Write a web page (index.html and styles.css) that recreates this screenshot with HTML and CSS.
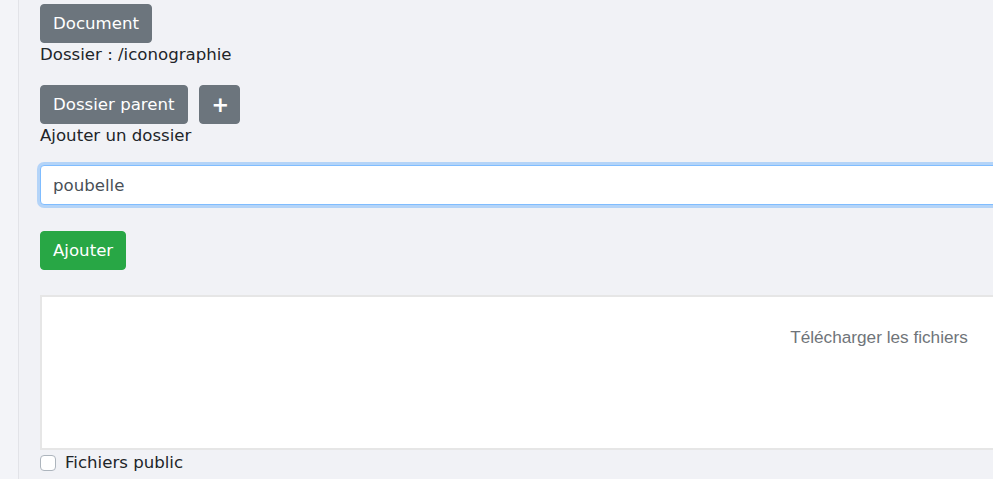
FILE: index.html
```html
<!DOCTYPE html>
<html lang="fr">
<head>
    <meta charset="UTF-8">
    <meta name="viewport" content="width=device-width, initial-scale=1.0">
    <title>Documents</title>
    <link rel="stylesheet" href="styles.css">
</head>
<body>
    <div class="side"></div>

    <div class="content">
        <button class="btn btn-grey">Document</button>
        <div class="path">Dossier : /iconographie</div>

        <div class="btn-row">
            <button class="btn btn-grey">Dossier parent</button>
            <button class="btn btn-grey btn-plus">+</button>
        </div>
        <label class="field-label" for="folder">Ajouter un dossier</label>

        <input class="field" id="folder" type="text" value="poubelle">

        <button class="btn btn-green">Ajouter</button>

        <div class="dropzone">
            <div class="dz-message">Télécharger les fichiers</div>
        </div>

        <label class="check">
            <span class="box"></span>
            Fichiers public
        </label>
    </div>
</body>
</html>
```

FILE: styles.css
```css
* {
    margin: 0;
    padding: 0;
    box-sizing: border-box;
}

body {
    font-family: 'DejaVu Sans', sans-serif;
    font-size: 16.6px;
    line-height: 24px;
    color: #212529;
    background: #f1f2f6;
    display: flex;
    min-height: 100vh;
    overflow: hidden;
}

.side {
    width: 19px;
    flex-shrink: 0;
    background: #f3f4f8;
    border-right: 1px solid #e2e3e8;
}

.content {
    padding: 4px 0 0 21px;
    width: 1700px;
    flex-shrink: 0;
}

.btn {
    font-family: inherit;
    font-size: 16.6px;
    line-height: 24px;
    padding: 6.5px 12px;
    border: 1px solid transparent;
    border-radius: 4px;
    color: #fff;
    cursor: pointer;
    display: inline-block;
}

.btn-grey {
    background: #6c757d;
    border-color: #6c757d;
}

.btn-green {
    background: #28a745;
    border-color: #28a745;
    margin-top: 26px;
}

.btn-plus {
    width: 41px;
    font-weight: bold;
    font-size: 21px;
    margin-left: 11px;
}

.path {
    margin-bottom: 18px;
}

.btn-row {
    display: flex;
}

.field-label {
    display: block;
    margin-bottom: 17px;
}

.field {
    display: block;
    width: 1678px;
    height: 40px;
    padding: 6px 12px;
    font-family: inherit;
    font-size: 16.6px;
    color: #495057;
    background: #fff;
    border: 1px solid #80bdff;
    border-radius: 4px;
    box-shadow: 0 0 0 3px rgba(0, 123, 255, 0.25);
    outline: none;
}

.dropzone {
    margin-top: 25px;
    width: 1678px;
    height: 155px;
    background: #fff;
    border: 2px solid #e6e6e6;
    padding-top: 28px;
    text-align: center;
}

.dz-message {
    font-family: 'Liberation Sans', Arial, sans-serif;
    font-size: 17.2px;
    color: #6f7479;
}

.check {
    display: flex;
    align-items: center;
    gap: 9px;
    margin-top: 1px;
}

.box {
    width: 16px;
    height: 16px;
    border: 1px solid #adb5bd;
    border-radius: 4px;
    background: #fff;
}
```
